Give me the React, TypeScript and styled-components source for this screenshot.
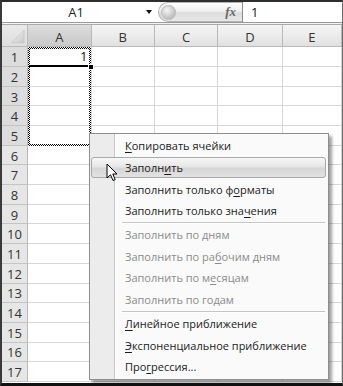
import React from 'react';
import styled, { createGlobalStyle } from 'styled-components';

const Global = createGlobalStyle`
  html, body { margin: 0; padding: 0; background: #fff; }
  body { font-family: "Open Sans", "Liberation Sans", sans-serif; }
`;

const COLS = ['A', 'B', 'C', 'D', 'E'];
const ROWS = Array.from({ length: 17 }, (_, i) => i + 1);

type MenuEntry =
  | { kind: 'item'; parts: [string, string, string]; disabled?: boolean; active?: boolean }
  | { kind: 'sep' };

const MENU: MenuEntry[] = [
  { kind: 'item', parts: ['', 'К', 'опировать ячейки'] },
  { kind: 'item', parts: ['Заполн', 'и', 'ть'], active: true },
  { kind: 'item', parts: ['Заполнить только ф', 'о', 'рматы'] },
  { kind: 'item', parts: ['Заполнить только зна', 'ч', 'ения'] },
  { kind: 'sep' },
  { kind: 'item', parts: ['Заполнить по дням', '', ''], disabled: true },
  { kind: 'item', parts: ['Заполнить по ра', 'б', 'очим дням'], disabled: true },
  { kind: 'item', parts: ['Заполнить по м', 'е', 'сяцам'], disabled: true },
  { kind: 'item', parts: ['Заполнить по годам', '', ''], disabled: true },
  { kind: 'sep' },
  { kind: 'item', parts: ['', 'Л', 'инейное приближение'] },
  { kind: 'item', parts: ['', 'Э', 'кспоненциальное приближение'] },
  { kind: 'item', parts: ['Про', 'г', 'рессия...'] },
];

export default function App() {
  return (
    <>
      <Global />
      <Frame>
        <FormulaBar>
          <NameBox>
            <NameText>A1</NameText>
            <DropArrow />
          </NameBox>
          <FxPill>
            <Knob />
            <Fx>fx</Fx>
          </FxPill>
          <FormulaInput>1</FormulaInput>
        </FormulaBar>
        <BarGap />
        <Sheet>
          <Corner>
            <svg width="26" height="21" viewBox="0 0 26 21">
              <defs>
                <linearGradient id="tri" x1="0" y1="0" x2="1" y2="1">
                  <stop offset="0" stopColor="#f4f4f4" />
                  <stop offset="1" stopColor="#c9c9c9" />
                </linearGradient>
              </defs>
              <polygon points="23,5 23,18 10,18" fill="url(#tri)" stroke="#bdbdbd" strokeWidth="0.6" />
            </svg>
          </Corner>
          {COLS.map((c) => (
            <ColHead key={c} $selected={c === 'A'}>{c}</ColHead>
          ))}
          {ROWS.map((r) => (
            <React.Fragment key={r}>
              <RowHead $selected={r <= 5}>{r}</RowHead>
              {COLS.map((c) => (
                <Cell key={c}>{r === 1 && c === 'A' ? '1' : ''}</Cell>
              ))}
            </React.Fragment>
          ))}
        </Sheet>

        <Marquee />
        <ActiveEdge />
        <FillHandle />

        <Menu>
          {MENU.map((m, i) =>
            m.kind === 'sep' ? (
              <Separator key={i} />
            ) : (
              <Item key={i} $disabled={!!m.disabled} $active={!!m.active}>
                {m.parts[0]}
                {m.parts[1] && <Key>{m.parts[1]}</Key>}
                {m.parts[2]}
              </Item>
            )
          )}
        </Menu>

        <Cursor width="14" height="20" viewBox="0 0 14 20">
          <path d="M1 1 L1 15 L4.5 11.8 L7 17.5 L9.2 16.6 L6.8 11 L11 11 Z" fill="#fff" stroke="#000" strokeWidth="1" strokeLinejoin="round" />
        </Cursor>
      </Frame>
    </>
  );
}

const Frame = styled.div`
  position: relative;
  width: 343px;
  height: 386px;
  box-sizing: border-box;
  border-top: 2px solid #2e2e2e;
  border-left: 2px solid #3a3a3a;
  border-right: 1px solid #6a6a6a;
  border-bottom: 3px solid #111;
  overflow: hidden;
  background: #fff;
`;

const FormulaBar = styled.div`
  display: flex;
  height: 20px;
  border-bottom: 1px solid #9a9a9a;
  background: #fff;
`;

const NameBox = styled.div`
  position: relative;
  width: 156px;
  display: flex;
  align-items: center;
  justify-content: center;
`;

const NameText = styled.span`
  font-size: 13px;
  color: #222;
  margin-left: -8px;
`;

const DropArrow = styled.span`
  position: absolute;
  right: 6px;
  top: 8px;
  width: 0;
  height: 0;
  border-left: 3.5px solid transparent;
  border-right: 3.5px solid transparent;
  border-top: 4px solid #111;
`;

const FxPill = styled.div`
  width: 84px;
  box-sizing: border-box;
  display: flex;
  align-items: center;
  justify-content: space-between;
  padding: 0 6px 0 2px;
  border: 1px solid #b4b4b4;
  border-right: none;
  border-radius: 11px 0 0 11px;
  background: linear-gradient(#ffffff, #f0f0f0 45%, #dcdcdc 55%, #e8e8e8);
`;

const Knob = styled.span`
  width: 15px;
  height: 15px;
  border-radius: 50%;
  background: radial-gradient(circle at 40% 35%, #f6f6f6, #b8b8b8 70%, #9c9c9c);
  box-shadow: inset 0 0 0 1px #c4c4c4;
`;

const Fx = styled.span`
  font-family: "Liberation Serif", "DejaVu Serif", serif;
  font-style: italic;
  font-weight: bold;
  font-size: 13px;
  color: #6a6a6a;
`;

const FormulaInput = styled.div`
  flex: 1;
  border-left: 1px solid #8c8c8c;
  padding-left: 8px;
  font-size: 13px;
  color: #111;
  line-height: 20px;
`;

const BarGap = styled.div`
  height: 1px;
  background: #f4f4f4;
  border-bottom: 1px solid #aaaaaa;
`;

const Sheet = styled.div`
  display: grid;
  grid-template-columns: 26px 63.5px 63.5px 63.3px 64.4px 1fr;
  grid-template-rows: 22.3px;
  grid-auto-rows: 19.7px;
`;

const HeadBase = styled.div`
  box-sizing: border-box;
  border-right: 1px solid #b9b9b9;
  border-bottom: 1px solid #b9b9b9;
  display: flex;
  align-items: center;
  justify-content: center;
  font-size: 13px;
  color: #333;
`;

const Corner = styled(HeadBase)`
  background: linear-gradient(#e9e9e9, #dedede);
  align-items: flex-end;
`;

const ColHead = styled(HeadBase)<{ $selected: boolean }>`
  padding-top: 2px;
  background: ${(p) =>
    p.$selected
      ? 'linear-gradient(#dedede, #d2d2d2 50%, #c9c9c9)'
      : 'linear-gradient(#f4f4f4, #ececec 50%, #e0e0e0)'};
`;

const RowHead = styled(HeadBase)<{ $selected: boolean }>`
  background: ${(p) => (p.$selected ? '#dcdcdc' : '#e6e6e6')};
  border-bottom-color: #c4c4c4;
  padding-top: 1px;
`;

const Cell = styled.div`
  box-sizing: border-box;
  border-right: 1px solid #d6d6d6;
  border-bottom: 1px solid #d6d6d6;
  font-size: 13px;
  color: #111;
  text-align: right;
  padding-right: 3px;
  line-height: 19px;
`;

const Marquee = styled.div`
  position: absolute;
  left: 26px;
  top: 45px;
  width: 63px;
  height: 99px;
  box-sizing: border-box;
  padding: 2px;
  background: repeating-conic-gradient(#000 0 25%, #fff 0 50%) 0 0 / 2px 2px;
  -webkit-mask: linear-gradient(#000 0 0) content-box, linear-gradient(#000 0 0);
  -webkit-mask-composite: xor;
  mask-composite: exclude;
`;

const ActiveEdge = styled.div`
  position: absolute;
  left: 27px;
  top: 63px;
  width: 60px;
  height: 2px;
  background: #000;
`;

const FillHandle = styled.div`
  position: absolute;
  left: 86px;
  top: 62px;
  width: 4px;
  height: 4px;
  background: #000;
  border: 1px solid #fff;
`;

const Menu = styled.div`
  position: absolute;
  left: 87px;
  top: 131px;
  width: 240px;
  box-sizing: border-box;
  padding: 1px 0 1px;
  border: 1px solid #8e8e8e;
  background: linear-gradient(90deg, #ececec 0 24px, #c6c6c6 24px 25px, #ffffff 25px 26px, #fafafa 26px);
  box-shadow: 3px 3px 3px rgba(0, 0, 0, 0.38);
`;

const Item = styled.div<{ $disabled: boolean; $active: boolean }>`
  height: 21.7px;
  box-sizing: border-box;
  margin: 0 2px 0 1px;
  padding-left: 33px;
  display: flex;
  align-items: center;
  white-space: pre;
  font-size: 11px;
  color: ${(p) => (p.$disabled ? '#8a8a8a' : '#1a1a1a')};
  border-radius: 3px;
  border: 1px solid ${(p) => (p.$active ? '#a9a9a9' : 'transparent')};
  background: ${(p) =>
    p.$active ? 'linear-gradient(#f8f8f8, #e6e6e6 45%, #d6d6d6 55%, #e2e2e2)' : 'transparent'};
`;

const Key = styled.span`
  text-decoration: underline;
  text-underline-offset: 2px;
`;

const Separator = styled.div`
  height: 0;
  margin: 0 3px 0 32px;
  border-top: 1px solid #c5c5c5;
  border-bottom: 1px solid #fff;
`;

const Cursor = styled.svg`
  position: absolute;
  left: 104px;
  top: 161px;
`;
